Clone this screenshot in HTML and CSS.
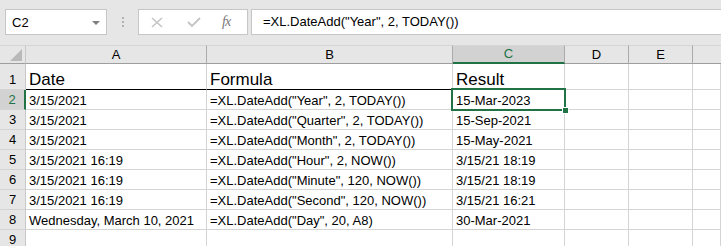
FILE: index.html
```html
<!DOCTYPE html>
<html lang="en">
<head>
    <meta charset="UTF-8">
    <title>XL.DateAdd</title>
    <link rel="stylesheet" href="styles.css">
</head>
<body>
    <div class="formula-bar">
        <div class="name-box">
            <span class="name-text">C2</span>
            <span class="name-arrow"></span>
        </div>
        <div class="grip"><i></i><i></i><i></i></div>
        <div class="fx-box">
            <svg class="fx-icon" width="12" height="11" viewBox="0 0 12 11"><path d="M1 1 L11 10 M11 1 L1 10" stroke="#c4c4c4" stroke-width="1.6" fill="none"/></svg>
            <svg class="fx-icon" width="14" height="10" viewBox="0 0 14 10"><path d="M1 5 L5 9 L13 1" stroke="#c4c4c4" stroke-width="1.8" fill="none"/></svg>
            <span class="fx-label">fx</span>
        </div>
        <div class="formula-input">=XL.DateAdd("Year", 2, TODAY())</div>
    </div>

    <div class="sheet">
        <div class="hd corner"><span class="corner-tri"></span></div>
        <div class="hd">A</div>
        <div class="hd">B</div>
        <div class="hd active">C</div>
        <div class="hd">D</div>
        <div class="hd">E</div>
        <div class="hd last"></div>

        <div class="rh">1</div>
        <div class="cell big thick">Date</div>
        <div class="cell big thick">Formula</div>
        <div class="cell big">Result</div>
        <div class="cell"></div><div class="cell"></div><div class="cell"></div>

        <div class="rh active">2</div>
        <div class="cell">3/15/2021</div>
        <div class="cell">=XL.DateAdd("Year", 2, TODAY())</div>
        <div class="cell selected">15-Mar-2023</div>
        <div class="cell"></div><div class="cell"></div><div class="cell"></div>

        <div class="rh">3</div>
        <div class="cell">3/15/2021</div>
        <div class="cell">=XL.DateAdd("Quarter", 2, TODAY())</div>
        <div class="cell">15-Sep-2021</div>
        <div class="cell"></div><div class="cell"></div><div class="cell"></div>

        <div class="rh">4</div>
        <div class="cell">3/15/2021</div>
        <div class="cell">=XL.DateAdd("Month", 2, TODAY())</div>
        <div class="cell">15-May-2021</div>
        <div class="cell"></div><div class="cell"></div><div class="cell"></div>

        <div class="rh">5</div>
        <div class="cell">3/15/2021 16:19</div>
        <div class="cell">=XL.DateAdd("Hour", 2, NOW())</div>
        <div class="cell">3/15/21 18:19</div>
        <div class="cell"></div><div class="cell"></div><div class="cell"></div>

        <div class="rh">6</div>
        <div class="cell">3/15/2021 16:19</div>
        <div class="cell">=XL.DateAdd("Minute", 120, NOW())</div>
        <div class="cell">3/15/21 18:19</div>
        <div class="cell"></div><div class="cell"></div><div class="cell"></div>

        <div class="rh">7</div>
        <div class="cell">3/15/2021 16:19</div>
        <div class="cell">=XL.DateAdd("Second", 120, NOW())</div>
        <div class="cell">3/15/21 16:21</div>
        <div class="cell"></div><div class="cell"></div><div class="cell"></div>

        <div class="rh">8</div>
        <div class="cell">Wednesday, March 10, 2021</div>
        <div class="cell">=XL.DateAdd("Day", 20, A8)</div>
        <div class="cell">30-Mar-2021</div>
        <div class="cell"></div><div class="cell"></div><div class="cell"></div>

        <div class="rh">9</div>
        <div class="cell"></div><div class="cell"></div><div class="cell"></div>
        <div class="cell"></div><div class="cell"></div><div class="cell"></div>
    </div>
</body>
</html>
```

FILE: styles.css
```css
body {
    margin: 0;
    font-family: "Liberation Sans", Arial, sans-serif;
    font-size: 13px;
    color: #000;
    background: #fff;
    overflow: hidden;
}
.formula-bar {
    height: 45px;
    box-sizing: border-box;
    padding: 9px 0 0 5px;
    background: #e6e6e6;
    display: flex;
    align-items: flex-start;
}
.name-box {
    width: 102px;
    height: 26px;
    box-sizing: border-box;
    background: #fff;
    border: 1px solid #c6c6c6;
    display: flex;
    align-items: center;
    padding: 0 6px 0 6px;
}
.name-text {
    flex-grow: 1;
}
.name-arrow {
    width: 0;
    height: 0;
    border-left: 4px solid transparent;
    border-right: 4px solid transparent;
    border-top: 4px solid #7f7f7f;
    margin-top: 1px;
}
.grip {
    width: 31px;
    height: 26px;
    display: flex;
    flex-direction: column;
    align-items: center;
    justify-content: center;
    gap: 2px;
}
.grip i {
    width: 2px;
    height: 2px;
    background: #b2b2b2;
}
.fx-box {
    width: 110px;
    height: 26px;
    box-sizing: border-box;
    background: #fff;
    border: 1px solid #c6c6c6;
    display: flex;
    align-items: center;
    padding: 0 0 0 12px;
    gap: 0;
}
.fx-icon:first-child {
    margin-right: 24px;
}
.fx-icon:nth-child(2) {
    margin-right: 21px;
}
.fx-label {
    font-family: "Liberation Serif", serif;
    font-style: italic;
    font-size: 14px;
    color: #777;
    letter-spacing: -1px;
}
.formula-input {
    flex-grow: 1;
    margin-left: 3px;
    height: 26px;
    box-sizing: border-box;
    background: #fff;
    border: 1px solid #c6c6c6;
    border-right: none;
    padding: 0 0 0 11px;
    line-height: 24px;
}
.sheet {
    display: grid;
    grid-template-columns: 26px 181px 246px 112px 64px 64px 1fr;
    grid-template-rows: 19px 26px repeat(8, 20px);
}
.hd {
    background: #e6e6e6;
    border-top: 1px solid #d5d5d5;
    border-right: 1px solid #ababab;
    border-bottom: 1px solid #9e9e9e;
    box-sizing: border-box;
    display: flex;
    align-items: center;
    justify-content: center;
    line-height: 16px;
}
.hd.last {
    border-right: none;
}
.hd.corner {
    border-right: 1px solid #c8c8c8;
    position: relative;
}
.corner-tri {
    position: absolute;
    left: 10px;
    top: 3px;
    width: 12px;
    height: 12px;
    background: #b9b9b9;
    clip-path: polygon(100% 0, 100% 100%, 0 100%);
}
.hd.active {
    background: #d2d2d2;
    color: #217346;
    border-bottom: 2px solid #217346;
}
.rh {
    background: #e6e6e6;
    border-right: 1px solid #c8c8c8;
    border-bottom: 1px solid #d4d4d4;
    box-sizing: border-box;
    display: flex;
    align-items: flex-end;
    justify-content: center;
    line-height: 16px;
    padding-bottom: 1px;
}
.rh.active {
    background: #d2d2d2;
    color: #217346;
    border-right: 2px solid #217346;
}
.cell {
    border-right: 1px solid #d4d4d4;
    border-bottom: 1px solid #d4d4d4;
    box-sizing: border-box;
    display: flex;
    align-items: flex-end;
    padding: 0 3px;
    line-height: 16px;
    white-space: nowrap;
}
.cell.big {
    font-size: 17px;
    line-height: 18px;
}
.cell.thick {
    border-bottom: 1px solid #000;
}
.cell.selected {
    position: relative;
}
.cell.selected::before {
    content: "";
    position: absolute;
    left: -2px;
    top: -2px;
    right: -2px;
    bottom: -2px;
    border: 2px solid #217346;
}
.cell.selected::after {
    content: "";
    position: absolute;
    right: -4px;
    bottom: -4px;
    width: 5px;
    height: 5px;
    background: #217346;
    outline: 1px solid #fff;
}
```
